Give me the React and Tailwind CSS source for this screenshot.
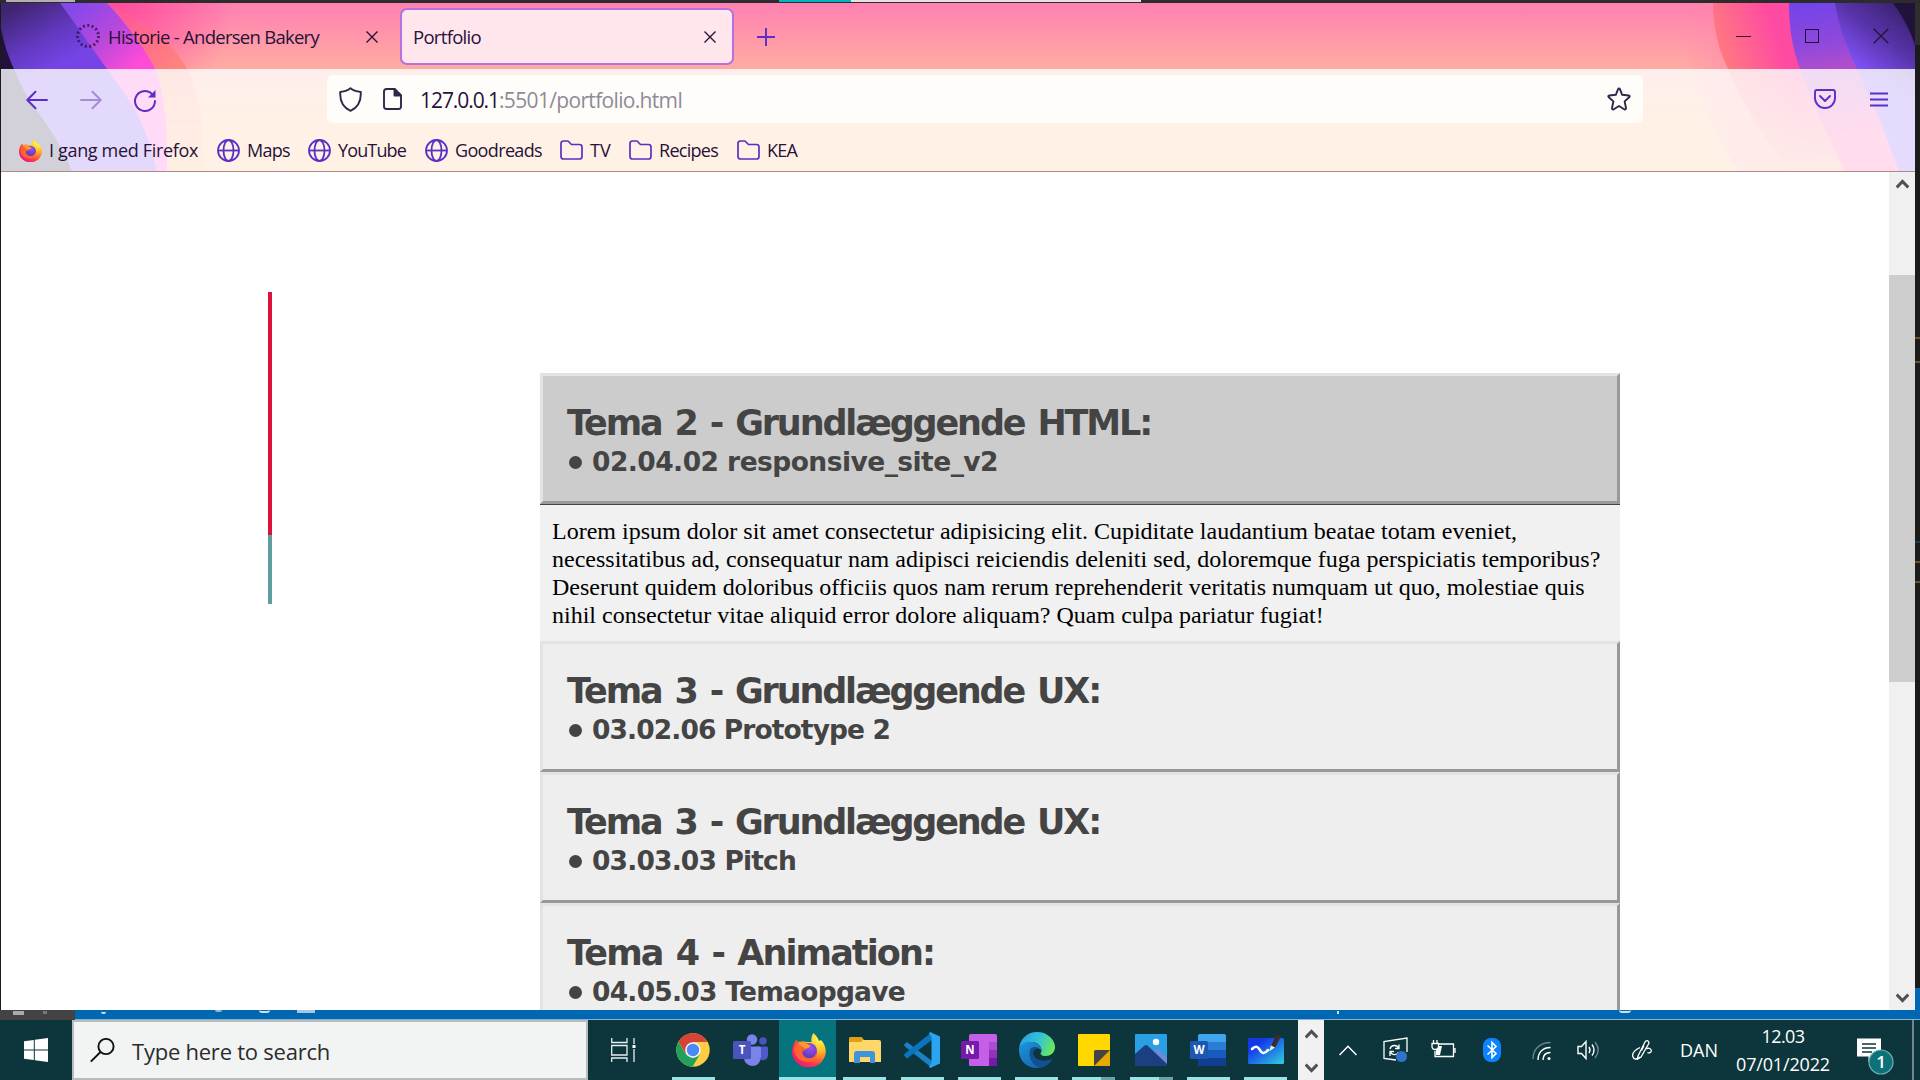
import { useLayoutEffect, useRef, useState } from "react";

/* Text run whose tracking is adjusted so that it spans the given width. */
function Fit({ w, className = "", children }) {
  const ref = useRef(null);
  const [space, setSpace] = useState(0);
  useLayoutEffect(() => {
    const natural = ref.current.getBoundingClientRect().width;
    setSpace((w - natural) / Math.max(1, ref.current.textContent.length));
  }, [w]);
  return (
    <span ref={ref} style={{ letterSpacing: space + "px" }} className={"inline-block shrink-0 whitespace-nowrap " + className}>
      {children}
    </span>
  );
}

function ThemeArt() {
  return (
    <svg className="absolute inset-0" width="1914" height="169" viewBox="1 3 1914 169">
      <defs>
        <linearGradient id="sky" x1="0" y1="0" x2="0" y2="1">
          <stop offset="0" stopColor="#ff80b2" />
          <stop offset="0.39" stopColor="#ffaca2" />
          <stop offset="0.7" stopColor="#ffba7e" />
          <stop offset="1" stopColor="#ffba7e" />
        </linearGradient>
        <radialGradient id="glow" gradientUnits="userSpaceOnUse" cx="115" cy="0" r="120">
          <stop offset="0" stopColor="#ff4a9c" />
          <stop offset="1" stopColor="#ff4a9c" stopOpacity="0" />
        </radialGradient>
        <linearGradient id="coral" gradientUnits="userSpaceOnUse" x1="110" y1="3" x2="180" y2="80">
          <stop offset="0" stopColor="#ff4fa0" />
          <stop offset="1" stopColor="#ff8a78" />
        </linearGradient>
        <linearGradient id="coral2" gradientUnits="userSpaceOnUse" x1="0" y1="69" x2="0" y2="171">
          <stop offset="0" stopColor="#ff8a78" />
          <stop offset="1" stopColor="#ffae74" />
        </linearGradient>
        <linearGradient id="mag" gradientUnits="userSpaceOnUse" x1="80" y1="3" x2="135" y2="66">
          <stop offset="0" stopColor="#8548ea" />
          <stop offset="0.55" stopColor="#bc48dc" />
          <stop offset="1" stopColor="#ff4bd8" />
        </linearGradient>
        <linearGradient id="vio" gradientUnits="userSpaceOnUse" x1="20" y1="3" x2="55" y2="66">
          <stop offset="0" stopColor="#3f2470" />
          <stop offset="0.6" stopColor="#6239c0" />
          <stop offset="1" stopColor="#7543e6" />
        </linearGradient>
        <linearGradient id="rPink" gradientUnits="userSpaceOnUse" x1="1715" y1="40" x2="1772" y2="20">
          <stop offset="0" stopColor="#ff7a80" />
          <stop offset="1" stopColor="#ff4aa2" />
        </linearGradient>
        <linearGradient id="rLow" gradientUnits="userSpaceOnUse" x1="0" y1="60" x2="0" y2="171">
          <stop offset="0" stopColor="#ff7a80" stopOpacity="0" />
          <stop offset="1" stopColor="#ff9a90" />
        </linearGradient>
        <linearGradient id="rVio" gradientUnits="userSpaceOnUse" x1="1815" y1="3" x2="1835" y2="135">
          <stop offset="0" stopColor="#7444e8" />
          <stop offset="0.3" stopColor="#8e48dc" />
          <stop offset="0.6" stopColor="#c050c8" />
          <stop offset="1" stopColor="#ff50a8" />
        </linearGradient>
        <linearGradient id="rDeep" gradientUnits="userSpaceOnUse" x1="1905" y1="5" x2="1858" y2="66">
          <stop offset="0" stopColor="#38206a" />
          <stop offset="0.5" stopColor="#5733a8" />
          <stop offset="1" stopColor="#7d50f4" />
        </linearGradient>
        <linearGradient id="fade" gradientUnits="userSpaceOnUse" x1="1680" y1="0" x2="1730" y2="0">
          <stop offset="0" stopColor="#ff86a6" stopOpacity="0" />
          <stop offset="1" stopColor="#ff86b0" />
        </linearGradient>
      </defs>
      <rect x="1" y="3" width="1914" height="169" fill="url(#sky)" />
      <rect x="1" y="3" width="300" height="169" fill="url(#glow)" />
      <path d="M107 3C150 22 178 48 190 75C200 100 204 130 203 172H100V3Z" fill="url(#coral)" />
      <path d="M155 69H188C200 100 204 130 203 172H160Z" fill="url(#coral2)" />
      <path d="M60 3H107C125 22 146 50 155 69C165 95 168 130 167 172H100Z" fill="url(#mag)" />
      <path d="M1 3H60C80 30 100 60 115 80C140 112 150 140 157 172H1Z" fill="url(#vio)" />
      <path d="M1 28C4 44 8 56 14 69C22 90 32 104 42 118C56 138 66 154 72 172H1Z" fill="#20123a" />
      <path d="M1680 3H1713C1713 30 1719 50 1728 69C1745 108 1768 145 1792 172H1740C1700 120 1685 60 1680 3Z" fill="url(#fade)" opacity="0.5" />
      <path d="M1713 3C1713 30 1719 50 1728 69C1745 108 1768 145 1792 172H1915V3Z" fill="url(#rPink)" />
      <path d="M1728 69C1745 108 1768 145 1792 172H1850L1800 69Z" fill="url(#rLow)" />
      <path d="M1789 3C1789 30 1793 50 1800 69C1815 110 1830 140 1845 172H1915V3Z" fill="url(#rVio)" />
      <path d="M1835 3C1838 25 1847 48 1857 69L1880 120L1899 172H1915V3Z" fill="url(#rDeep)" />
      <path d="M1893 3C1903 17 1910 30 1915 45V3Z" fill="#20123a" />
    </svg>
  );
}

function Close({ s = 12, sw = 1.4, className = "" }) {
  return (
    <svg width={s} height={s} viewBox="0 0 12 12" className={"shrink-0 " + className} stroke="#2a1238" strokeWidth={sw} fill="none">
      <path d="M.5 .5L11.5 11.5M11.5 .5L.5 11.5" />
    </svg>
  );
}

function Firefox({ s, id, className = "" }) {
  return (
    <svg width={s} height={s} viewBox="0 0 34 34" className={"shrink-0 " + className}>
      <defs>
        <radialGradient id={id + "a"} cx="0.82" cy="0.15" r="1">
          <stop offset="0.1" stopColor="#fff04a" />
          <stop offset="0.35" stopColor="#ffc02c" />
          <stop offset="0.58" stopColor="#ff7a2a" />
          <stop offset="0.78" stopColor="#ff3350" />
          <stop offset="1" stopColor="#e81878" />
        </radialGradient>
        <radialGradient id={id + "b"} cx="0.6" cy="0.3" r="0.7">
          <stop offset="0" stopColor="#a04fee" />
          <stop offset="1" stopColor="#5438b8" />
        </radialGradient>
      </defs>
      <path d="M21.500 0C23 1.500 26 4.500 27 8L29 7C33 11 34.500 17 33.500 21C32 29 25 34.500 17 34.500C8 34.500 0 28 0 18.500C0 14 2 9.500 4.500 6.500L6 10C8 8.500 10 8 12 8.500C15 9 17 9 19.500 9C19 5 20 2 21.500 0Z" fill={"url(#" + id + "a)"} />
      <circle cx="17" cy="18" r="8" fill={"url(#" + id + "b)"} />
      <path d="M2 17C3 11 7 8.500 12 11C13 12 15 12.500 18 12.500C18 14.500 16 15.500 13.500 16C13 18 12 18 10.500 18.500C10 22 13 25 17 25C21 25 23 23 24 20C26 25 22 29 16 29C8 29 3 24 2 17Z" fill="#ff6a2c" opacity="0.85" />
      <path d="M6 8C9 10 15 10 18.500 12.500C18 14.500 15.500 15.300 13 15.800C10.500 13 7 12 6 8Z" fill="#ff9a30" />
    </svg>
  );
}

function Globe() {
  return (
    <svg width="23" height="23" viewBox="0 0 23 23" fill="none" stroke="#5b2fc4" strokeWidth="1.8" className="shrink-0">
      <circle cx="11.500" cy="11.500" r="10.500" />
      <ellipse cx="11.500" cy="11.500" rx="5" ry="10.500" />
      <path d="M1 11.500H22" />
    </svg>
  );
}

function Folder() {
  return (
    <svg width="23" height="20" viewBox="0 0 23 20" fill="none" stroke="#5b2fc4" strokeWidth="1.7" strokeLinejoin="round" className="mb-px shrink-0">
      <path d="M1 3.500Q1 1 3.500 1H8L11.500 4.500H19.500Q22 4.500 22 7V16.500Q22 19 19.500 19H3.500Q1 19 1 16.500Z" />
    </svg>
  );
}

function Bookmark({ icon, w, step, children }) {
  return (
    <div className={"flex shrink-0 items-center gap-[7px] " + step}>
      {icon}
      <Fit w={w} className="leading-6">{children}</Fit>
    </div>
  );
}

function BrowserChrome() {
  return (
    <header className="relative h-[169px] shrink-0 overflow-hidden font-['Open_Sans',sans-serif] text-[#26123a]">
      <ThemeArt />
      <div className="relative flex h-[66px] items-center text-[18.5px]">
        <svg width="26" height="26" viewBox="0 0 26 26" className="ml-[74px] shrink-0" fill="none" stroke="#3a1552">
          <circle cx="13" cy="13" r="10.500" strokeWidth="3" strokeDasharray="2 2.4" opacity="0.85" />
        </svg>
        <Fit w={211} className="ml-[7px] mt-px">Historie - Andersen Bakery</Fit>
        <Close className="ml-[47px] mt-px" />
        <div className="ml-[22px] flex h-[57px] w-[334px] shrink-0 items-center justify-between rounded-[7px] border-2 border-[#b272e2] bg-[#ffe6ec] pl-[11px] pr-[16px]">
          <Fit w={68} className="mt-px">Portfolio</Fit>
          <Close className="mt-px" />
        </div>
        <svg width="18" height="18" viewBox="0 0 18 18" stroke="#5b2fc4" strokeWidth="1.9" className="ml-[23px] mt-px">
          <path d="M9 0V18M0 9H18" />
        </svg>
        <div className="ml-auto mr-[26px] flex items-center">
          <div className="mr-[54px] h-px w-[15px] bg-[#35103a]" />
          <div className="mr-[54px] h-[14px] w-[14px] border border-[#25083a]" />
          <Close s={16} sw={1} />
        </div>
      </div>
      <div className="relative h-[102px] bg-white/80">
        <div className="flex h-[60px] items-center">
          <svg width="22" height="20" viewBox="0 0 22 20" fill="none" stroke="#5b2fc4" strokeWidth="2" className="ml-[25px] mt-[2px] shrink-0" strokeLinecap="round" strokeLinejoin="round">
            <path d="M21 10H1.500M9.500 1.800L1.300 10L9.500 18.200" />
          </svg>
          <svg width="22" height="20" viewBox="0 0 22 20" fill="none" stroke="#a78bd8" strokeWidth="2" className="ml-[32px] mt-[2px] shrink-0" strokeLinecap="round" strokeLinejoin="round">
            <path d="M1 10H20.500M12.500 1.800L20.700 10L12.500 18.200" />
          </svg>
          <svg width="24" height="24" viewBox="0 0 24 24" fill="none" stroke="#5b2fc4" strokeWidth="2" className="ml-[31px] mt-[3px] shrink-0">
            <path d="M22 12A10 10 0 1 1 17.500 3.700L20 6" strokeLinecap="round" />
            <path d="M22.500 1V8.500H15Z" fill="#5b2fc4" stroke="none" />
          </svg>
          <div className="ml-[170px] flex h-[48px] w-[1316px] shrink-0 items-center rounded-[6px] bg-[#fffdfa] text-[21px]">
            <svg width="23" height="25" viewBox="0 0 23 25" fill="none" stroke="#33254a" strokeWidth="1.900" className="ml-[12px] shrink-0" strokeLinejoin="round">
              <path d="M11.500 1.200C13.500 3.200 17 4.500 21.800 5C22.200 14 19 20.500 11.500 23.800C4 20.500 .8 14 1.200 5C6 4.500 9.500 3.200 11.500 1.200Z" />
            </svg>
            <svg width="19" height="22" viewBox="0 0 19 22" fill="none" stroke="#33254a" strokeWidth="1.900" className="ml-[21px] shrink-0" strokeLinejoin="round">
              <path d="M1 3.500Q1 1 3.500 1H11.500L18 7.500V18.500Q18 21 15.500 21H3.500Q1 21 1 18.500Z" />
              <path d="M11.500 1V7.500H18Z" fill="#33254a" />
            </svg>
            <Fit w={79} className="ml-[18px] mt-[3px]">127.0.0.1</Fit>
            <Fit w={183} className="mt-[3px] text-[#8f8a98]">:5501/portfolio.html</Fit>
            <svg width="24" height="24" viewBox="0 0 24 24" fill="none" stroke="#33254a" strokeWidth="1.900" strokeLinejoin="round" className="ml-auto mr-[12px]">
              <path d="M12 1.500Q12.700 1.500 13 2.300L15.200 7.800L21.600 8.500Q23.500 8.900 22.200 10.300L17.600 14.400L19 21Q19 23 17.200 22.300L12 19L6.800 22.300Q5 23 5 21L6.400 14.400L1.800 10.300Q.5 8.900 2.400 8.500L8.800 7.800L11 2.300Q11.300 1.500 12 1.500Z" />
            </svg>
          </div>
          <svg width="22" height="20" viewBox="0 0 22 20" fill="none" stroke="#5b2fc4" strokeWidth="1.900" strokeLinecap="round" strokeLinejoin="round" className="ml-auto mr-[34px]">
            <path d="M3 1H19Q21 1 21 3V9A10 10 0 0 1 1 9V3Q1 1 3 1ZM6 7L11 12L16 7" />
          </svg>
          <svg width="18" height="15" viewBox="0 0 18 15" stroke="#5b2fc4" strokeWidth="1.900" className="mr-[27px]">
            <path d="M0 1.500H18M0 7.500H18M0 13.500H18" />
          </svg>
        </div>
        <div className="flex h-[42px] items-center pb-px pt-px text-[18px]">
          <Bookmark w={149} step="ml-[18px]" icon={<Firefox s={23} id="fxSmall" />}>I gang med Firefox</Bookmark>
          <Bookmark w={43} step="ml-[19px]" icon={<Globe />}>Maps</Bookmark>
          <Bookmark w={68} step="ml-[18px]" icon={<Globe />}>YouTube</Bookmark>
          <Bookmark w={87} step="ml-[19px]" icon={<Globe />}>Goodreads</Bookmark>
          <Bookmark w={21} step="ml-[18px]" icon={<Folder />}>TV</Bookmark>
          <Bookmark w={59} step="ml-[18px]" icon={<Folder />}>Recipes</Bookmark>
          <Bookmark w={30} step="ml-[19px]" icon={<Folder />}>KEA</Bookmark>
        </div>
      </div>
      <div className="relative h-px bg-[#b08a7c]" />
    </header>
  );
}

function Theme({ title, titleW, item, itemW, active }) {
  return (
    <div className={"h-[131px] shrink-0 border-[3px] border-b-[#999] border-l-[#e3e3e3] border-r-[#999] border-t-[#e3e3e3] pl-[24px] pt-[25px] font-['DejaVu_Sans',sans-serif] font-bold text-[#444] " + (active ? "bg-[#ccc]" : "bg-[#eee]")}>
      <div className="flex h-[45px] items-center text-[35px] leading-[45px] [word-spacing:3px]">
        <Fit w={titleW}>{title}</Fit>
      </div>
      <div className="flex h-[32px] items-center text-[26.5px] leading-[32px]">
        <span className="ml-[2px] mr-[10px] h-[13px] w-[13px] rounded-full bg-[#444]" />
        <Fit w={itemW}>{item}</Fit>
      </div>
    </div>
  );
}

function Chevron({ up, className = "" }) {
  return (
    <svg width="13" height="10" viewBox="0 0 13 10" fill="none" stroke="#505050" strokeWidth="3" className={className}>
      <path d={up ? "M.7 8.500L6.500 2.500L12.300 8.500" : "M.7 1.500L6.500 7.500L12.300 1.500"} />
    </svg>
  );
}

function Page() {
  return (
    <div className="flex h-[838px] bg-white">
      <main className="flex min-w-0 flex-1 overflow-hidden">
        <div className="ml-[267px] mt-[120px] w-[4px] shrink-0">
          <div className="h-[243px] bg-[#dc143c]" />
          <div className="h-[69px] bg-[#5f9ea0]" />
        </div>
        <div className="ml-[268px] mt-[201px] flex w-[1080px] shrink-0 flex-col">
          <Theme active title="Tema 2 - Grundlæggende HTML:" titleW={584} item="02.04.02 responsive_site_v2" itemW={406} />
          <div className="h-[137px] shrink-0 whitespace-nowrap border-t border-[#444] bg-[#f1f1f1] px-[12px] py-[12px] font-['Liberation_Serif',serif] text-[24px] leading-[28px] text-black">
            <p>Lorem ipsum dolor sit amet consectetur adipisicing elit. Cupiditate laudantium beatae totam eveniet,</p>
            <p>necessitatibus ad, consequatur nam adipisci reiciendis deleniti sed, doloremque fuga perspiciatis temporibus?</p>
            <p>Deserunt quidem doloribus officiis quos nam rerum reprehenderit veritatis numquam ut quo, molestiae quis</p>
            <p>nihil consectetur vitae aliquid error dolore aliquam? Quam culpa pariatur fugiat!</p>
          </div>
          <Theme title="Tema 3 - Grundlæggende UX:" titleW={533} item="03.02.06 Prototype 2" itemW={298} />
          <Theme title="Tema 3 - Grundlæggende UX:" titleW={533} item="03.03.03 Pitch" itemW={204} />
          <Theme title="Tema 4 - Animation:" titleW={367} item="04.05.03 Temaopgave" itemW={313} />
        </div>
      </main>
      <div className="flex w-[26px] flex-col items-center bg-[#f0f0f0]">
        <Chevron up className="mt-[7px]" />
        <div className="mt-[86px] h-[407px] w-full bg-[#cdcdcd]" />
        <Chevron className="mb-[7px] mt-auto" />
      </div>
    </div>
  );
}

function OfficeBadge({ letter, y = 9, color }) {
  return (
    <g>
      <rect x="0" y={y} width="18" height="18" rx="1.500" fill={color} />
      <text x="9" y={y + 13} textAnchor="middle" fontFamily="Open Sans" fontWeight="700" fontSize="11.500" fill="#fff">{letter}</text>
    </g>
  );
}

function Chrome() {
  return (
    <svg width="34" height="34" viewBox="0 0 34 34">
      <circle cx="17" cy="17" r="16.700" fill="#ffcd41" />
      <path d="M2.400 8.800A16.700 16.700 0 0 1 31.600 9H17L9.800 21Z" fill="#d64437" />
      <path d="M2.400 8.800A16.700 16.700 0 0 0 16.500 33.700L24 21L17 25L9.800 21.200Z" fill="#1fa15d" />
      <circle cx="17" cy="17" r="7.800" fill="#f3f3f3" />
      <circle cx="17" cy="17" r="6.200" fill="#4a8af4" />
    </svg>
  );
}
function Teams() {
  return (
    <svg width="35" height="34" viewBox="0 0 35 34">
      <circle cx="30" cy="8" r="3.800" fill="#4b53bc" />
      <path d="M24 13.500H33.500Q35 13.500 35 15V22Q35 28 28 27Z" fill="#5059c9" />
      <circle cx="19" cy="6.500" r="5.200" fill="#7b83eb" />
      <path d="M12 13.500H26Q28 13.500 28 15.500V24Q27 33 19 33Q11 32 11 24Z" fill="#7b83eb" />
      <OfficeBadge letter="T" y={8} color="#4b53bc" />
    </svg>
  );
}
function Explorer() {
  return (
    <svg width="32" height="27" viewBox="0 0 32 27">
      <path d="M0 2Q0 0 2 0H12L15 3H30Q32 3 32 5V25H0Z" fill="#ffd768" />
      <path d="M0 2Q0 0 2 0H12Q14 0 14 2.500L12 5H0Z" fill="#e2a010" />
      <path d="M5 26V17Q5 14 8 14H23Q26 14 26 17V26H21V20H11V26Z" fill="#3d94dc" />
    </svg>
  );
}
function Code() {
  return (
    <svg width="36" height="36" viewBox="0 0 36 36">
      <path d="M0 12.500L3 10L28 29V36L1 14.500Q0 13.500 0 12.500Z" fill="#1a80c8" />
      <path d="M0 23.500L3 26.500L28 8V0L1 21.500Q0 22.500 0 23.500Z" fill="#0b74c0" />
      <path d="M26 0L36 4.500V31.500L26 36L25 34.500L27.500 31V5L25 1.500Z" fill="#2ba4f0" />
    </svg>
  );
}
function OneNote() {
  return (
    <svg width="36" height="34" viewBox="0 0 36 34">
      <rect x="8" y="1" width="28" height="32" rx="1.500" fill="#c65fe8" />
      <path d="M28 9H36V17H28Z" fill="#b04ad4" />
      <path d="M28 17H36V25H28Z" fill="#9332bf" />
      <path d="M28 25H36V33H28Z" fill="#7719aa" />
      <OfficeBadge letter="N" y={8} color="#7719aa" />
    </svg>
  );
}
function Edge() {
  return (
    <svg width="36" height="36" viewBox="0 0 36 36">
      <defs>
        <linearGradient id="edTop" x1="0" y1="0.3" x2="1" y2="0.6">
          <stop offset="0" stopColor="#2ba0e0" />
          <stop offset="0.5" stopColor="#30c2d8" />
          <stop offset="1" stopColor="#6ce858" />
        </linearGradient>
        <linearGradient id="edLow" x1="0" y1="0" x2="1" y2="1">
          <stop offset="0" stopColor="#1f96dc" />
          <stop offset="1" stopColor="#0c59a4" />
        </linearGradient>
      </defs>
      <path d="M0 17C1 6 9 0 18 0C29 0 36 8 36 15C36 21 31 24 27 24C22 24 20.500 22 22.500 19.500C23 13 17 10 12 10C6 10 2 13 0 17Z" fill="url(#edTop)" />
      <path d="M0 17C3 10 9 9 13 10C19 11 23 15 22.500 19C21 15 14 15 14 21C14 29 26 31 33 27C30 33 24 36 18 36C7 36 -.5 28 0 17Z" fill="url(#edLow)" />
      <path d="M11 18C9 26 14 34 21 35.500C26 35 31 31.500 33.500 27C26 31 14 29 14 21C14 17 17 16 20 16C16 14 12 15 11 18Z" fill="#134f92" />
    </svg>
  );
}
function Sticky() {
  return (
    <svg width="32" height="32" viewBox="0 0 32 32">
      <rect width="32" height="32" rx="1" fill="#ffd800" />
      <path d="M16 32V16H32V32Z" fill="#e9a800" />
      <path d="M16 32V18Q16 16 18 16H32Z" fill="#444" />
    </svg>
  );
}
function Photos() {
  return (
    <svg width="32" height="32" viewBox="0 0 32 32">
      <rect width="32" height="32" rx="1" fill="#29a0e4" />
      <path d="M16 20L21 15Q22 14 23 15L32 24V32H16Z" fill="#7088d8" />
      <path d="M0 20L9 12Q11 10 13 12L32 30V32H0Z" fill="#1b3f80" />
      <circle cx="21" cy="8" r="3.200" fill="#fff" />
    </svg>
  );
}
function Word() {
  return (
    <svg width="36" height="34" viewBox="0 0 36 34">
      <rect x="8" y="1" width="28" height="32" rx="1.500" fill="#41a5ee" />
      <path d="M8 9H36V17H8Z" fill="#2b7cd3" />
      <path d="M8 17H36V25H8Z" fill="#185abd" />
      <path d="M8 25H36V31.500Q36 33 34.500 33H9.500Q8 33 8 31.500Z" fill="#103f91" />
      <OfficeBadge letter="W" y={8} color="#1d57b4" />
    </svg>
  );
}
function Whiteboard() {
  return (
    <svg width="36" height="31" viewBox="0 0 36 31">
      <defs>
        <linearGradient id="wb" x1="0" y1="0" x2="1" y2="1">
          <stop offset="0.25" stopColor="#1238e8" />
          <stop offset="1" stopColor="#30d0e0" />
        </linearGradient>
      </defs>
      <rect y="5" width="36" height="26" rx="1.500" fill="url(#wb)" />
      <path d="M4 16C8 12 10 14 12 17C14 21 17 21 20 17" fill="none" stroke="#fff" strokeWidth="2.600" strokeLinecap="round" />
      <path d="M28.500 1L33 3L27 15L23 13Z" fill="#3c2c30" />
      <path d="M23 12.500L27 14.500L21 18.500Z" fill="#eee" />
    </svg>
  );
}

function TaskButton({ children, bar = true, split, active }) {
  return (
    <div className={"relative flex h-full w-[57.25px] shrink-0 items-center justify-center " + (active ? "bg-[#06747c]" : "")}>
      {children}
      {bar && (
        <div className={"absolute bottom-0 flex h-[3px] " + (active ? "w-full" : "w-[43px]")}>
          <div className="h-full flex-1 bg-[#9be4e6]" />
          {split && <div className="h-full w-[14px] bg-[#6aa3a6]" />}
        </div>
      )}
    </div>
  );
}

function Taskbar() {
  return (
    <footer className="flex h-[60px] items-center bg-[#0c363c] font-['Open_Sans',sans-serif] text-white">
      <svg width="24" height="24" viewBox="0 0 24 24" fill="#fff" className="ml-[24px] shrink-0">
        <path d="M0 3.300L9.800 2V11.500H0ZM10.800 1.800L24 0V11.500H10.800ZM0 12.500H9.800V22L0 20.700ZM10.800 12.500H24V24L10.800 22.200Z" />
      </svg>
      <div className="ml-[24px] flex h-[60px] w-[516px] shrink-0 items-center border-2 border-[#b9bcbc] bg-[#f2f4f4] text-[22px] text-[#2b2b2b]">
        <svg width="25" height="25" viewBox="0 0 25 25" fill="none" stroke="#111" strokeWidth="1.900" className="ml-[16px] shrink-0">
          <circle cx="16" cy="8.500" r="7.600" />
          <path d="M10.500 14L.8 23.700" />
        </svg>
        <Fit w={198} className="ml-[17px] mt-[2px]">Type here to search</Fit>
      </div>
      <svg width="26" height="24" viewBox="0 0 26 24" fill="none" stroke="#e8eeee" strokeWidth="1.300" className="ml-[23px] mr-[27.5px] shrink-0">
        <path d="M.7 0V4.500H16V0M.7 7.500H16V17H.7ZM.7 24V20H16V24M23 0V6M23 11V24" />
        <rect x="21.500" y="7" width="3" height="3" fill="#fff" stroke="none" />
      </svg>
      <div className="flex h-full w-[633.5px] shrink-0">
        <TaskButton><Chrome /></TaskButton>
        <TaskButton bar={false}><Teams /></TaskButton>
        <TaskButton active><Firefox s={34} id="fxBig" className="ml-[2px]" /></TaskButton>
        <TaskButton><Explorer /></TaskButton>
        <TaskButton><Code /></TaskButton>
        <TaskButton><OneNote /></TaskButton>
        <TaskButton><Edge /></TaskButton>
        <TaskButton split><Sticky /></TaskButton>
        <TaskButton split><Photos /></TaskButton>
        <TaskButton><Word /></TaskButton>
        <TaskButton><div className="mb-1"><Whiteboard /></div></TaskButton>
      </div>
      <div className="flex h-full w-[26px] shrink-0 flex-col items-center justify-between bg-[#f1f1f1] pb-[7px] pt-[9px]">
        <Chevron up />
        <Chevron />
      </div>
      <svg width="18" height="11" viewBox="0 0 18 11" fill="none" stroke="#fff" strokeWidth="1.500" className="ml-[15px] shrink-0">
        <path d="M.5 10L9 1.300L17.500 10" />
      </svg>
      <svg width="25" height="26" viewBox="0 0 25 26" fill="none" stroke="#fff" strokeWidth="1.300" className="ml-[26px] shrink-0">
        <path d="M13 23L1 21.500V4.500L24 1V15" />
        <path d="M7 12C8 7.500 14 7.500 15.500 11M16 7.500V11.500H12M15.500 15C14 18.500 9 18.500 7.500 15M7 19V14.500H11" />
        <circle cx="18.500" cy="19.500" r="5.500" fill="#2f74c8" stroke="none" />
      </svg>
      <svg width="25" height="20" viewBox="0 0 25 20" fill="none" stroke="#fff" strokeWidth="1.300" className="ml-[23px] shrink-0">
        <path d="M8 4H22.500V16.500H4V11M24 8V13" />
        <path d="M6.500 6H11L9 15H5V11Z" fill="#fff" stroke="none" />
        <path d="M2.500 0V3.500M6 0V3.500M1 3.500H7.500V6.500Q7.500 9.500 4.300 9.500Q1 9.500 1 6.500Z" fill="#0c363c" />
      </svg>
      <svg width="18" height="24" viewBox="0 0 18 24" fill="none" stroke="#fff" strokeWidth="1.600" className="ml-[27px] shrink-0">
        <rect width="18" height="24" rx="8" fill="#0a84ff" stroke="none" />
        <path d="M4.500 7.500L13 15.500L9 19.500V4.500L13 8.500L4.500 16.500" />
      </svg>
      <svg width="20" height="20" viewBox="0 0 20 20" fill="none" stroke="#fff" strokeWidth="1.400" className="ml-[31px] mt-[2px] shrink-0">
        <path d="M1 18C1 8 8 1.500 18.500 1.500" opacity="0.4" />
        <path d="M6 19C6 11 11 6.500 18.500 6.500" />
        <path d="M11 19C11 14 14 11.500 18.500 11.500" />
        <circle cx="17" cy="17.500" r="1.500" fill="#fff" stroke="none" />
      </svg>
      <svg width="23" height="20" viewBox="0 0 23 20" fill="none" stroke="#fff" strokeWidth="1.400" className="ml-[25px] shrink-0">
        <path d="M1 6.500H4.500L9 1.500V18.500L4.500 13.500H1Z" />
        <path d="M12 7Q14 10 12 13M15 4.500Q19 10 15 15.500" />
        <path d="M18 2Q24.500 10 18 18" opacity="0.4" />
      </svg>
      <svg width="20" height="20" viewBox="0 0 20 20" fill="none" stroke="#fff" strokeWidth="1.300" className="ml-[32px] shrink-0">
        <path d="M6 16L13 2Q14.500 0 16 1Q17.500 2 16.500 4L9 17L5.500 19Z" />
        <path d="M8 7.500C3 10 0 13.500 .8 16.500C1.500 19.500 5 20 8 17M14 8.500C16 8 19 8 19.300 10.500C19.500 12.500 17 13.500 15.500 12.500M12 5.500L9.500 10.500" />
      </svg>
      <Fit w={38} className="ml-[28px] text-[18px]">DAN</Fit>
      <div className="ml-[17px] flex w-[96px] shrink-0 flex-col items-center text-[18px] leading-[28px]">
        <Fit w={43}>12.03</Fit>
        <Fit w={94}>07/01/2022</Fit>
      </div>
      <svg width="37" height="37" viewBox="0 0 37 37" className="ml-[26px] mt-[12px] shrink-0">
        <path d="M0 .5H24V18.500H17L11.500 24V18.500H0Z" fill="#fff" />
        <path d="M5 6H19M5 10H19M5 14H15" stroke="#0c363c" strokeWidth="1.300" />
        <circle cx="24" cy="24" r="12" fill="#0c7278" stroke="#6fb0b2" strokeWidth="1.200" />
        <text x="24" y="30" textAnchor="middle" fontFamily="Open Sans" fontWeight="600" fontSize="17" fill="#fff">1</text>
      </svg>
      <div className="ml-auto mr-[6px] h-full w-[2px] bg-[#6f8789]" />
    </footer>
  );
}

export default function App() {
  return (
    <div className="flex h-[1080px] w-[1920px] flex-col overflow-hidden bg-[#1b1b1b]">
      <div className="flex h-[3px] shrink-0 bg-[#2c2c2c]">
        <div className="ml-[6px] h-[2px] w-[69px] bg-[#b5afaf]" />
        <div className="ml-[704px] h-[2px] w-[72px] bg-[#00b4c4]" />
        <div className="h-[2px] w-[290px] bg-[#e8e0e2]" />
      </div>
      <div className="flex h-[1007px] shrink-0 bg-[#1b1b1b] pl-px">
        <div className="w-[1914px] shrink-0">
          <BrowserChrome />
          <Page />
        </div>
        <div className="flex w-[5px] flex-col">
          <div className="h-[42px] shrink-0 bg-[#2e2e2e]" />
          <div className="mt-[292px] h-[2px] shrink-0 bg-[#6b4f28]" />
          <div className="mt-[22px] h-[2px] shrink-0 bg-[#6b4f28]" />
          <div className="mt-[178px] h-[2px] shrink-0 bg-[#1d3a4c]" />
          <div className="mt-[18px] h-[2px] shrink-0 bg-[#6b4f28]" />
          <div className="mt-[18px] h-[2px] shrink-0 bg-[#6b4f28]" />
          <div className="mt-auto h-[22px] shrink-0 bg-[#0068b4]" />
        </div>
      </div>
      <div className="flex h-[10px] shrink-0 border-b border-[#8fb2cc] bg-[#0067b2]">
        <div className="flex h-[10px] w-[75px] shrink-0 bg-[#434343]">
          <div className="ml-[13px] mt-px h-[4px] w-[11px] bg-[#aaa]" />
          <div className="ml-[19px] mt-px h-[3px] w-[4px] bg-[#777]" />
        </div>
        <div className="ml-[26px] h-[4px] w-[5px] rounded-b border-b-2 border-[#cfe0ee]" />
        <div className="ml-[109px] h-[2px] w-[7px] rounded-b bg-[#8fb5d6]" />
        <div className="ml-[37px] h-[3px] w-[11px] rounded-b border-b-2 border-[#cfe0ee]" />
        <div className="ml-[27px] h-[3px] w-[18px] bg-[#a9c6de]" />
        <div className="ml-[1022px] mt-px h-[3px] w-[2px] bg-[#cfe0ee]" />
        <div className="ml-[280px] h-[3px] w-[12px] rounded-b border-b-2 border-[#cfe0ee]" />
      </div>
      <Taskbar />
    </div>
  );
}
